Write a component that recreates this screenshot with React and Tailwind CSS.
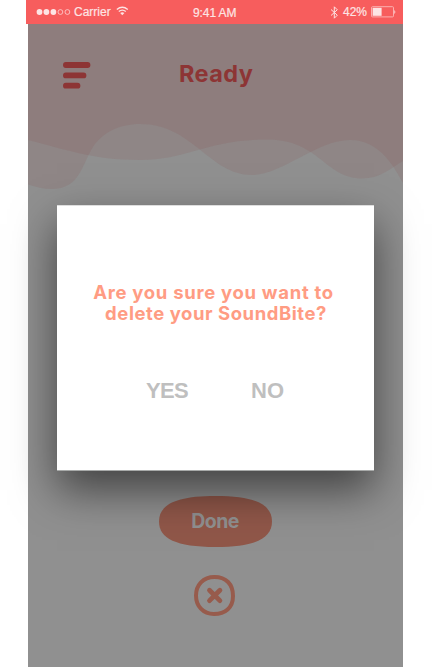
import React from "react";

const sans = "font-['Liberation_Sans',Arial,sans-serif]";

function StatusBar() {
  return (
    <div className="-ml-0.5 flex h-6 w-[377px] shrink-0 items-center bg-[#f75d5d] text-[12px] leading-none text-[#fde4e4] [-webkit-text-stroke:0.2px_#fde4e4]">
      <div className="flex w-[166px] items-center pl-[10px]">
        <svg width="35" height="8" viewBox="0 0 35 8" fill="currentColor">
          <circle cx="3.5" cy="4" r="2.9" />
          <circle cx="10.4" cy="4" r="2.9" />
          <circle cx="17.4" cy="4" r="2.9" />
          <circle cx="24.4" cy="4" r="2.4" fill="none" stroke="currentColor" strokeWidth="0.7" />
          <circle cx="31.4" cy="4" r="2.4" fill="none" stroke="currentColor" strokeWidth="0.7" />
        </svg>
        <span className="ml-[3px] w-[38px] whitespace-nowrap">Carrier</span>
        <svg className="-mt-0.5 ml-[4px]" width="13" height="10" viewBox="0 0 13 10" fill="none" stroke="currentColor" strokeWidth="1.3">
          <path d="M.8 3.5Q6.3-1 11.8 3.5M2.8 5.6Q6.3 2.7 9.8 5.6" />
          <path d="M4.2 7Q6.3 5.6 8.4 7L6.3 9.3Z" fill="currentColor" stroke="none" />
        </svg>
      </div>
      <span className="mt-0.5 w-[46px] whitespace-nowrap pl-[1px] tracking-[-0.1px]">9:41 AM</span>
      <div className="flex flex-1 items-center justify-end pr-[7px]">
        <svg width="9" height="13" viewBox="0 0 9 13" fill="none" stroke="currentColor" strokeWidth="1">
          <path d="M1 3.5 7.3 9.2 4.3 12.2V.8L7.3 3.8 1 9.5" />
        </svg>
        <span className="ml-[4px]">42%</span>
        <svg className="ml-[4px]" width="25" height="12" viewBox="0 0 25 12" fill="currentColor">
          <rect x=".5" y=".7" width="22" height="10.2" rx="1" fill="none" stroke="#fbb0b0" strokeWidth="1" />
          <rect x="1.6" y="1.8" width="9" height="8" />
          <path d="M23.4 4Q25.2 6 23.4 8Z" />
        </svg>
      </div>
    </div>
  );
}

function Waves() {
  return (
    <svg className="absolute top-6 left-0 -z-10" width="375" height="170" viewBox="28 24 375 170" fill="#8e2e2e" fillOpacity=".1">
      <path d="M28 24V140C65 149 92 160 140 160C188 160 206 140 266 139.5C319 139 325 178.500 362 178.500C380 178.500 390 169 403 161V24Z" />
      <path d="M28 24V184.500C36 187 43 189 52 189C80 189 82 164 93 147C102 133 119 124 140 124C193 124 209 175 252 175C282 175 317 140 350 140C381 140 395 169 403 183V24Z" />
    </svg>
  );
}

function Dialog() {
  return (
    <div className="mx-[29px] mt-[115px] flex h-[266px] w-[317px] shrink-0 flex-col items-center border-t border-b border-t-[#dedede] border-b-[#a8aaa9] bg-white font-bold shadow-[0_19px_41px_rgba(0,0,0,0.54)]">
      <p className="mt-[76px] pr-[4px] text-center font-['Inter',sans-serif] text-[18.500px] leading-[21px] text-[#ff9c83]">
        <span className="block whitespace-nowrap tracking-[0.7px]">Are you sure you want to</span>
        <span className="block whitespace-nowrap pl-[5px] tracking-[0.55px]">delete your SoundBite?</span>
      </p>
      <div className="mt-[54px] flex w-full pl-[89px] text-[22px] leading-[26px] text-[#bfbfbf]">
        <button className="w-[105px] text-left tracking-[-0.7px]">YES</button>
        <button>NO</button>
      </div>
    </div>
  );
}

export default function App() {
  return (
    <div className={`flex h-[667px] w-[432px] overflow-hidden bg-white pl-7 ${sans}`}>
      <main className="relative isolate flex w-[375px] flex-col bg-[#909090]">
        <Waves />
        <StatusBar />
        <header className="flex h-[66px] shrink-0 items-start pt-[38px] pl-[35px] text-[#8d3535]">
          <button aria-label="Menu">
            <svg width="28" height="28" viewBox="0 0 28 28" fill="none" stroke="currentColor" strokeWidth="5.800" strokeLinecap="round">
              <path d="M2.900 3H24.500M2.900 13.400H20.500M2.900 23.700H14.500" />
            </svg>
          </button>
          <h1 className="-mt-px ml-[88px] font-['Inter',sans-serif] text-[23.500px] leading-[25px] font-bold tracking-[0.4px]">Ready</h1>
        </header>
        <Dialog />
        <div className="-z-10 mt-[25px] flex flex-col items-center">
          <button className="mr-[1px] grid text-[#905749]">
            <svg className="col-start-1 row-start-1" width="113" height="51" viewBox="0 0 113 51" fill="currentColor">
              <path d="M56.500 0C96 0 113 8.500 113 25.500S96 51 56.500 51S0 42.500 0 25.500S17 0 56.500 0Z" />
            </svg>
            <span className="col-start-1 row-start-1 -mt-px place-self-center font-['Inter',sans-serif] text-[19.500px] font-bold leading-6 tracking-[-0.6px] text-[#909090]">Done</span>
          </button>
          <button className="mt-7 mr-[2px] text-[#975b4c]" aria-label="Close">
            <svg width="41" height="41" viewBox="0 0 41 41" fill="none" stroke="currentColor" strokeWidth="4">
              <path d="M20.500 2C32 2 39 9 39 21C39 33 31 39 20 39C9 39 2 31 2 20.500C2 10 9 2 20.500 2Z" />
              <path d="M15.500 15.200 25.900 25.600M25.900 15.200 15.500 25.600" strokeWidth="4.800" strokeLinecap="round" />
            </svg>
          </button>
        </div>
      </main>
    </div>
  );
}
